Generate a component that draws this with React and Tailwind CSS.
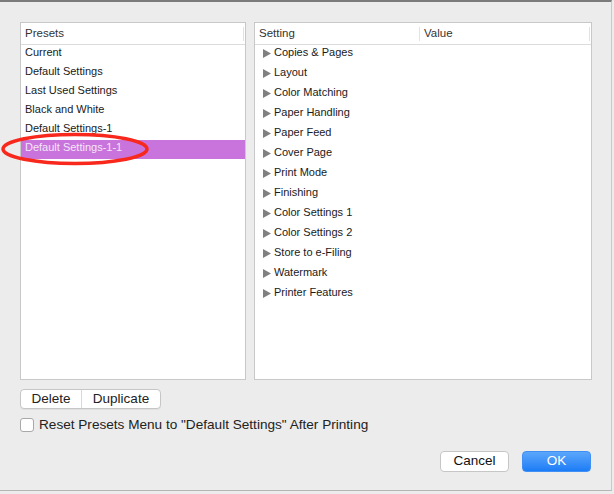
const presets = [
  'Current',
  'Default Settings',
  'Last Used Settings',
  'Black and White',
  'Default Settings-1',
  'Default Settings-1-1',
]

const settings = [
  'Copies & Pages',
  'Layout',
  'Color Matching',
  'Paper Handling',
  'Paper Feed',
  'Cover Page',
  'Print Mode',
  'Finishing',
  'Color Settings 1',
  'Color Settings 2',
  'Store to e-Filing',
  'Watermark',
  'Printer Features',
]

export default function App() {
  return (
    <div
      className="w-[614px] h-[494px] bg-[#ececec] overflow-hidden flex"
      style={{ fontFamily: '"Liberation Sans", Arial, sans-serif' }}
    >
      <div className="w-[612px] h-[491px] flex flex-col border-t-2 border-t-[#7b7b7b] border-r border-r-[#c9c9c9] border-b border-b-[#b5b5b5] relative">
        <div className="flex gap-2 pl-5 pt-5">
          {/* Presets list */}
          <div className="w-[226px] h-[358px] bg-white border border-[#c8c8c8] flex flex-col">
            <div className="h-[22px] flex items-center border-b border-[#dcdcdc] pl-1 text-[11.5px] text-[#333]">
              <span className="flex-1">Presets</span>
              <span className="w-px h-[14px] bg-[#e2e2e2] mr-[1px]" />
            </div>
            <div className="flex flex-col">
              {presets.map((p, i) =>
                i === presets.length - 1 ? (
                  <div key={p} className="h-[19px] flex items-center pl-1 pb-[4px] text-[11px] text-[#f4e6f8] bg-[#c874dc]">
                    {p}
                  </div>
                ) : (
                  <div key={p} className="h-[19px] flex items-center pl-1 pb-[4px] text-[11px] text-[#1a1a1a]">
                    {p}
                  </div>
                )
              )}
            </div>
          </div>

          {/* Settings list */}
          <div className="w-[338px] h-[358px] bg-white border border-[#c8c8c8] flex flex-col">
            <div className="h-[22px] flex items-center border-b border-[#dcdcdc] text-[11.5px] text-[#333]">
              <span className="w-[165px] pl-1 border-r border-[#e2e2e2] h-[14px] flex items-center">Setting</span>
              <span className="flex-1 pl-1">Value</span>
              <span className="w-px h-[14px] bg-[#e2e2e2] mr-[1px]" />
            </div>
            <div className="flex flex-col">
              {settings.map((s) => (
                <div key={s} className="h-[20px] flex items-center pl-2 pb-[5px] text-[11px] text-[#1a1a1a]">
                  <svg width="8" height="9" viewBox="0 0 8 9" className="mr-[3px] mt-[2px]">
                    <path d="M0 0 L8 4.5 L0 9 Z" fill="#808080" />
                  </svg>
                  {s}
                </div>
              ))}
            </div>
          </div>
        </div>

        {/* red annotation ellipse */}
        <svg width="152" height="38" viewBox="0 0 152 38" className="absolute left-[1px] top-[128px]">
          <ellipse cx="74" cy="19" rx="72" ry="14.5" fill="none" stroke="#f8281c" strokeWidth="3.5" />
        </svg>

        <div className="pl-5 pt-[6px]">
          <div className="inline-flex h-[20px] bg-white border border-[#c6c6c6] rounded-[4px] text-[13.5px] text-[#222] shadow-[0_1px_0_rgba(0,0,0,0.05)]">
            <span className="w-[61px] flex items-center justify-center border-r border-[#d8d8d8]">Delete</span>
            <span className="w-[78px] flex items-center justify-center">Duplicate</span>
          </div>
        </div>

        <div className="pl-5 pt-[5px] flex items-center gap-[5px] text-[13.6px] text-[#222]">
          <span className="w-[14px] h-[14px] bg-white border border-[#a9a9a9] rounded-[3px]" />
          <span>Reset Presets Menu to "Default Settings" After Printing</span>
        </div>

        <div className="flex-1" />

        <div className="flex justify-end gap-[13px] pr-[20px] pb-[18px]">
          <button className="w-[69px] h-[21px] bg-white border border-[#c6c6c6] rounded-[4px] text-[13.5px] text-[#111] flex items-center justify-center">
            Cancel
          </button>
          <button className="w-[69px] h-[21px] rounded-[4px] text-[13.5px] text-white flex items-center justify-center bg-gradient-to-b from-[#5aa6fa] to-[#1b7cf6] border border-[#3f8ff5]">
            OK
          </button>
        </div>
      </div>
    </div>
  )
}
